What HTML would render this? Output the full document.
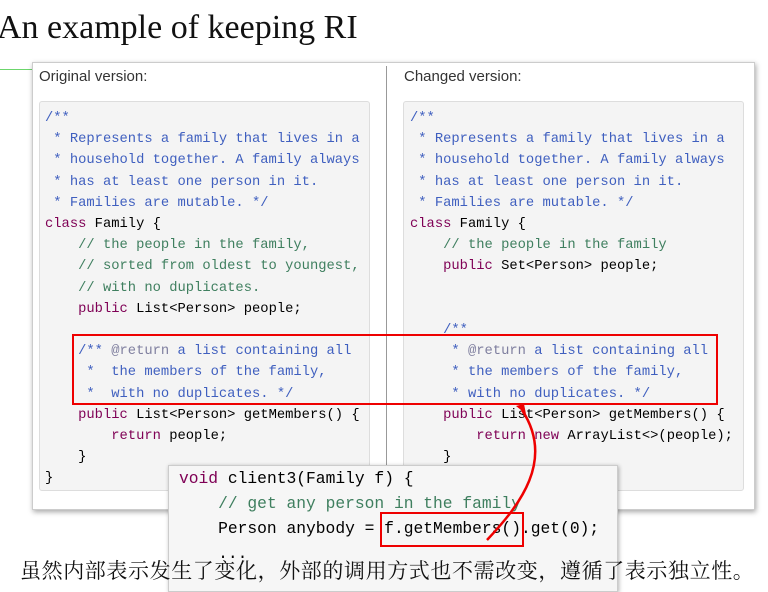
<!DOCTYPE html>
<html><head><meta charset="utf-8"><style>
body{margin:0;width:768px;height:585px;position:relative;overflow:hidden;background:#fff;font-family:"Liberation Sans",sans-serif}
.t{position:absolute;left:-3px;top:9px;font:34px "Liberation Serif",serif;color:#111;white-space:nowrap}
.g{position:absolute;left:0;top:69px;width:36px;height:1px;background:#6cd66c}
.panel{position:absolute;left:32px;top:62px;width:721px;height:446px;background:#fff;border:1px solid #ccc;box-shadow:1px 2px 5px rgba(0,0,0,.35)}
.div{position:absolute;left:386px;top:66px;width:1px;height:437px;background:#999}
.lab{position:absolute;top:68px;font-size:15px;color:#333}
.box{position:absolute;top:101px;height:388px;background:#f4f4f4;border:1px solid #ddd;border-radius:3px}
pre{position:absolute;margin:0;font:13.8px/21.2px "Liberation Mono",monospace;color:#000}
.k{color:#7f0055}.c{color:#3f7f5f}.j{color:#3f5fbf}.a{color:#7f7f9f}
.pop{position:absolute;left:168px;top:465px;width:448px;height:125px;background:#f6f6f6;border:1px solid #ccc;box-shadow:1px 1px 4px rgba(0,0,0,.3)}
.pop pre{font-size:16.3px;line-height:25px;left:10px;top:0px}
.r{position:absolute;border:2px solid #e00}
.cn{position:absolute;left:20px;top:555px;font:21px "Liberation Serif","Noto Serif CJK SC",serif;letter-spacing:0.6px;color:#111;white-space:nowrap}
</style></head><body>
<div class="t">An example of keeping RI</div>
<div class="g"></div>
<div class="panel"></div>
<div class="div"></div>
<div class="lab" style="left:39px">Original version:</div>
<div class="lab" style="left:404px">Changed version:</div>
<div class="box" style="left:39px;width:329px"></div>
<div class="box" style="left:403px;width:339px"></div>
<pre style="left:45px;top:108px"><span class="j">/**
 * Represents a family that lives in a
 * household together. A family always
 * has at least one person in it.
 * Families are mutable. */</span>
<span class="k">class</span> Family {
    <span class="c">// the people in the family,</span>
    <span class="c">// sorted from oldest to youngest,</span>
    <span class="c">// with no duplicates.</span>
    <span class="k">public</span> List&lt;Person&gt; people;

    <span class="j">/** <span class="a">@return</span> a list containing all
     *  the members of the family,
     *  with no duplicates. */</span>
    <span class="k">public</span> List&lt;Person&gt; getMembers() {
        <span class="k">return</span> people;
    }
}</pre>
<pre style="left:410px;top:108px"><span class="j">/**
 * Represents a family that lives in a
 * household together. A family always
 * has at least one person in it.
 * Families are mutable. */</span>
<span class="k">class</span> Family {
    <span class="c">// the people in the family</span>
    <span class="k">public</span> Set&lt;Person&gt; people;


    <span class="j">/**
     * <span class="a">@return</span> a list containing all
     * the members of the family,
     * with no duplicates. */</span>
    <span class="k">public</span> List&lt;Person&gt; getMembers() {
        <span class="k">return</span> <span class="k">new</span> ArrayList&lt;&gt;(people);
    }</pre>
<div class="r" style="left:72px;top:334px;width:642px;height:67px"></div>
<div class="pop"><pre><span class="k">void</span> client3(Family f) {
    <span class="c">// get any person in the family</span>
    Person anybody = f.getMembers().get(0);
    ...</pre></div>
<div class="r" style="left:380px;top:512px;width:140px;height:31px"></div>
<svg style="position:absolute;left:0;top:0" width="768" height="585"><path d="M487 540 C 520 505, 555 460, 522 410" fill="none" stroke="#e00" stroke-width="2.5"/><path d="M516 406 L524 404 L526 414 Z" fill="#e00"/></svg>
<div class="cn">虽然内部表示发生了变化，外部的调用方式也不需改变，遵循了表示独立性。</div>
</body></html>
